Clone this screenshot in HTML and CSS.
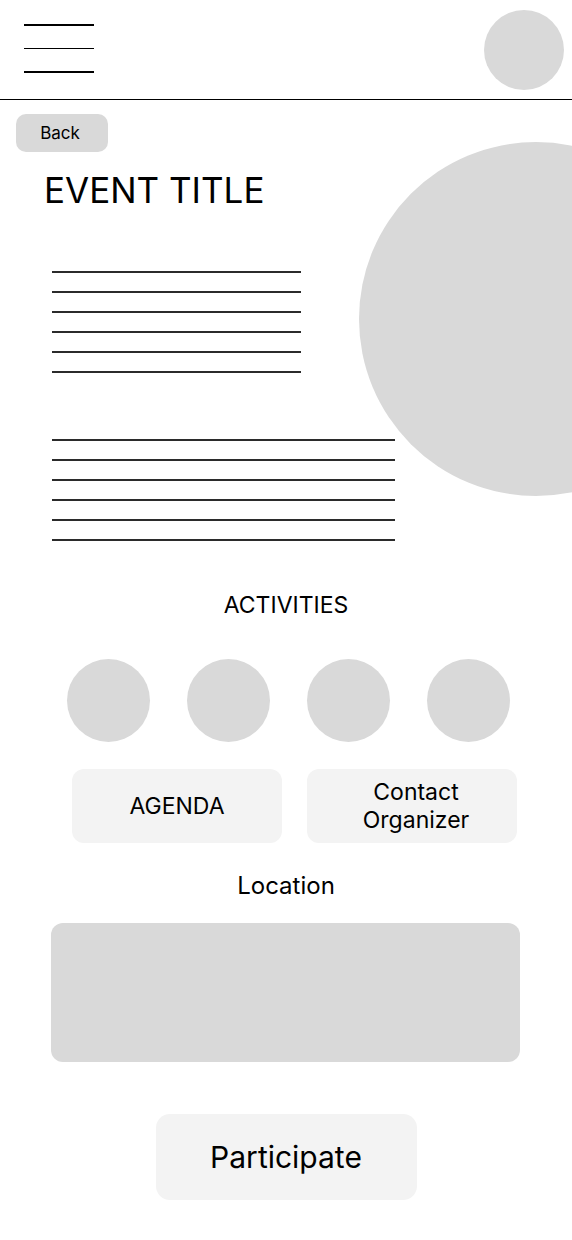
FILE: index.html
```html
<!DOCTYPE html>
<html lang="en">
<head>
    <meta charset="UTF-8">
    <meta name="viewport" content="width=device-width, initial-scale=1.0">
    <title>Event</title>
    <link rel="stylesheet" href="styles.css">
</head>
<body>
    <!-- top bar -->
    <header class="topbar">
        <div class="burger">
            <span></span>
            <span></span>
            <span></span>
        </div>
        <div class="avatar"></div>
    </header>

    <!-- event info -->
    <section class="hero">
        <div class="hero-pic"></div>
        <button class="back-btn">Back</button>
        <h1 class="title">EVENT TITLE</h1>
        <div class="text-lines short">
            <div></div><div></div><div></div><div></div><div></div><div></div>
        </div>
        <div class="text-lines long">
            <div></div><div></div><div></div><div></div><div></div><div></div>
        </div>
    </section>

    <h2 class="heading activities-heading">ACTIVITIES</h2>
    <div class="activities">
        <div class="activity"></div>
        <div class="activity"></div>
        <div class="activity"></div>
        <div class="activity"></div>
    </div>

    <div class="actions">
        <button class="action-btn">AGENDA</button>
        <button class="action-btn contact">Contact<br>Organizer</button>
    </div>

    <h2 class="heading location-heading">Location</h2>
    <div class="map"></div>

    <div class="participate-wrap">
        <button class="participate">Participate</button>
    </div>
</body>
</html>
```

FILE: styles.css
```css
* {
    box-sizing: border-box;
}
body {
    margin: 0;
    font-family: Inter, "Noto Sans", sans-serif;
    color: #000;
    background: #fff;
}
button {
    font-family: inherit;
    color: #000;
    border: none;
    padding: 0;
    cursor: pointer;
}

/* top bar */
.topbar {
    height: 100px;
    border-bottom: 1.5px solid #000;
    display: flex;
    justify-content: space-between;
    align-items: flex-start;
    padding: 10px 8px 0 24px;
}
.burger {
    display: flex;
    flex-direction: column;
    gap: 22px;
    width: 70px;
    margin-top: 14px;
}
.burger span {
    display: block;
    height: 1.5px;
    background: #000;
}
.avatar {
    width: 80px;
    height: 80px;
    border-radius: 50%;
    background: #d9d9d9;
}

/* event info */
.hero {
    position: relative;
    overflow: hidden;
    padding-bottom: 1px;
}
.hero-pic {
    position: absolute;
    top: 42px;
    left: 359px;
    width: 354px;
    height: 354px;
    border-radius: 50%;
    background: #d9d9d9;
}
.back-btn {
    display: block;
    position: relative;
    margin: 14px 0 0 16px;
    padding-right: 4px;
    width: 92px;
    height: 38px;
    border-radius: 10px;
    background: #d9d9d9;
    font-size: 17px;
}
.title {
    position: relative;
    margin: 16px 0 0 44px;
    font-size: 35px;
    line-height: 44px;
    font-weight: 400;
}
.text-lines {
    display: flex;
    flex-direction: column;
    gap: 18px;
    margin-left: 52px;
}
.text-lines div {
    height: 2px;
    background: #2b2b2b;
}
.text-lines.short {
    width: 249px;
    margin-top: 59px;
}
.text-lines.long {
    width: 343px;
    margin-top: 66px;
}

/* activities */
.heading {
    margin: 0;
    text-align: center;
    line-height: 28px;
    font-weight: 400;
}
.activities-heading {
    margin-top: 49px;
    font-size: 23px;
}
.activities {
    display: flex;
    gap: 37px;
    padding-left: 67px;
    margin-top: 40px;
}
.activity {
    width: 83px;
    height: 83px;
    border-radius: 50%;
    background: #d9d9d9;
}
.actions {
    display: flex;
    gap: 25px;
    padding-left: 72px;
    margin-top: 27px;
}
.action-btn {
    width: 210px;
    height: 74px;
    border-radius: 12px;
    background: #f3f3f3;
    font-size: 23px;
    line-height: 28px;
}
.action-btn.contact {
    padding-left: 8px;
}

/* location */
.location-heading {
    margin-top: 29px;
    font-size: 24px;
}
.map {
    width: 469px;
    height: 139px;
    margin: 23px 0 0 51px;
    border-radius: 12px;
    background: #d9d9d9;
}
.participate-wrap {
    display: flex;
    justify-content: center;
    margin-top: 52px;
}
.participate {
    width: 261px;
    height: 86px;
    border-radius: 14px;
    background: #f3f3f3;
    font-size: 30px;
}
```
